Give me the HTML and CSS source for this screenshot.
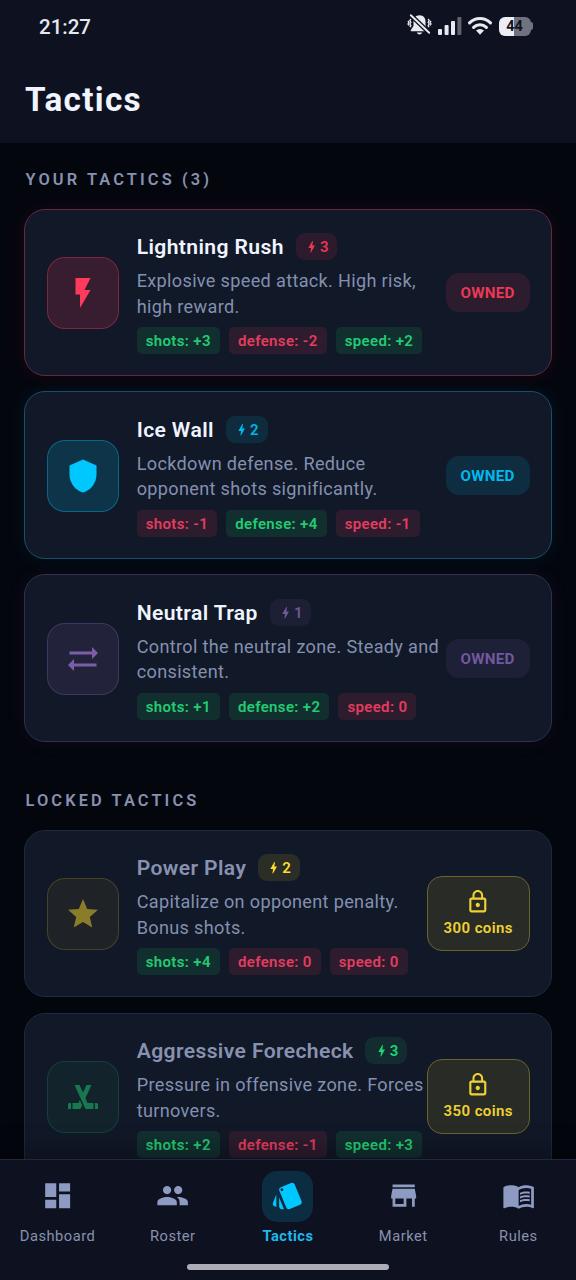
FILE: index.html
```html
<!DOCTYPE html>
<html lang="en">
<head>
<meta charset="utf-8">
<title>Tactics</title>
<link rel="stylesheet" href="styles.css">
</head>
<body>
<svg class="defs" aria-hidden="true">
  <symbol id="bolt" viewBox="0 0 24 24"><path d="M11 21h-1l1-7H7.500c-.88 0-.33-.75-.31-.78C8.480 10.940 10.420 7.540 13.010 3h1l-1 7h3.510c.4 0 .62.190.4.660C12.970 17.550 11 21 11 21z"/></symbol>
  <symbol id="flash" viewBox="0 0 24 24"><path d="M7 2v11h3v9l7-12h-4l4-8z"/></symbol>
  <symbol id="shield" viewBox="0 0 24 24"><path d="M12 1L3 5v6c0 5.550 3.840 10.740 9 12 5.160-1.260 9-6.450 9-12V5l-9-4z"/></symbol>
  <symbol id="swap" viewBox="0 0 24 24"><path d="M22 8l-4-4v3H3v2h15v3l4-4zM2 16l4 4v-3h15v-2H6v-3l-4 4z"/></symbol>
  <symbol id="star" viewBox="0 0 24 24"><path d="M12 17.270L18.180 21l-1.640-7.030L22 9.240l-7.190-.61L12 2 9.190 8.630 2 9.240l5.460 4.730L5.820 21z"/></symbol>
  <symbol id="hockey" viewBox="0 0 24 24"><path d="M2 17v3h2v-4H3c-.55 0-1 .45-1 1zM9 16H5v4l4.690-.01c.38 0 .72-.21.890-.55l.87-1.900-1.590-3.480L9 16zM21.710 16.290A1 1 0 0 0 21 16h-1v4h2v-3c0-.28-.11-.53-.29-.71zM13.600 12.840L17.650 4H14.300l-1.760 3.970-.49 1.100-.05.140L9.700 4H6.350l4.050 8.840 1.520 3.320.08.180 1.420 3.100c.17.340.51.550.89.550L19 20v-4h-4l-1.400-3.160z"/></symbol>
  <symbol id="lock" viewBox="0 0 24 24"><path d="M12 17c1.100 0 2-.9 2-2s-.9-2-2-2-2 .9-2 2 .9 2 2 2zm6-9h-1V6c0-2.760-2.240-5-5-5S7 3.240 7 6v2H6c-1.100 0-2 .9-2 2v10c0 1.100.9 2 2 2h12c1.100 0 2-.9 2-2V10c0-1.100-.9-2-2-2zM8.900 6c0-1.710 1.390-3.100 3.100-3.100s3.100 1.390 3.100 3.100v2H8.900V6zM18 20H6V10h12v10z"/></symbol>
  <symbol id="dashboard" viewBox="0 0 24 24"><path d="M3 13h8V3H3v10zm0 8h8v-6H3v6zm10 0h8V11h-8v10zm0-18v6h8V3h-8z"/></symbol>
  <symbol id="people" viewBox="0 0 24 24"><path d="M16 11c1.660 0 2.990-1.340 2.990-3S17.660 5 16 5s-3 1.340-3 3 1.340 3 3 3zm-8 0c1.660 0 2.990-1.340 2.990-3S9.660 5 8 5 5 6.340 5 8s1.340 3 3 3zm0 2c-2.330 0-7 1.170-7 3.500V19h14v-2.500c0-2.330-4.670-3.500-7-3.500zm8 0c-.29 0-.62.020-.97.050 1.160.840 1.970 1.970 1.970 3.450V19h6v-2.500c0-2.330-4.670-3.500-7-3.500z"/></symbol>
  <symbol id="style" viewBox="0 0 24 24"><path d="M2.530 19.650l1.340.560v-9.030l-2.430 5.860c-.41 1.020.080 2.190 1.090 2.610zm19.500-3.700L17.070 3.980c-.31-.75-1.040-1.210-1.810-1.230-.26 0-.53.040-.79.150L7.100 5.950c-.75.310-1.210 1.030-1.230 1.800-.01.270.04.540.15.800l4.960 11.970c.31.760 1.050 1.220 1.830 1.230.26 0 .52-.05.77-.15l7.360-3.050c1.020-.42 1.510-1.590 1.090-2.600zM7.880 8.750c-.55 0-1-.45-1-1s.45-1 1-1 1 .45 1 1-.45 1-1 1zm-2 11c0 1.100.9 2 2 2h1.450l-3.450-8.340v6.340z"/></symbol>
  <symbol id="store" viewBox="0 0 24 24"><path d="M20 4H4v2h16V4zm1 10v-2l-1-5H4l-1 5v2h1v6h10v-6h4v6h2v-6h1zm-9 4H6v-4h6v4z"/></symbol>
  <symbol id="book" viewBox="0 0 24 24"><path d="M21 5c-1.110-.35-2.330-.5-3.500-.5-1.950 0-4.050.4-5.500 1.500-1.450-1.100-3.550-1.500-5.500-1.500S2.450 4.900 1 6v14.650c0 .25.25.5.5.5.1 0 .15-.05.25-.05C3.100 20.450 5.050 20 6.500 20c1.950 0 4.050.4 5.500 1.500 1.350-.85 3.800-1.500 5.500-1.500 1.650 0 3.350.3 4.750 1.050.1.050.15.050.25.050.25 0 .5-.25.5-.5V6c-.6-.45-1.250-.75-2-1zm0 13.500c-1.100-.35-2.300-.5-3.500-.5-1.700 0-4.150.65-5.500 1.500V8c1.350-.85 3.800-1.500 5.500-1.500 1.200 0 2.400.15 3.500.5v11.500z"/><path d="M17.500 10.500c.88 0 1.730.09 2.500.26V9.240c-.79-.15-1.640-.24-2.500-.24-1.700 0-3.240.29-4.500.83v1.660c1.130-.64 2.700-.99 4.500-.99zM13 12.490v1.660c1.130-.64 2.700-.99 4.500-.99.88 0 1.730.09 2.500.26V11.900c-.79-.15-1.640-.24-2.500-.24-1.700 0-3.240.3-4.500.83zM17.500 14.330c-1.700 0-3.240.29-4.500.83v1.660c1.130-.64 2.700-.99 4.500-.99.88 0 1.730.09 2.500.26v-1.520c-.79-.16-1.640-.24-2.500-.24z"/></symbol>
</svg>

<div class="app">
  <header class="header">
    <div class="status">
      <span class="time">21:27</span>
      <div class="status-icons">
        <svg class="bell" viewBox="0 0 25 22">
          <path class="solid" d="M12.500 1.200c-4 0-6 3-6 6.300v4.500l-2.700 4v1.200h17.400V16l-2.700-4V7.500c0-3.300-2-6.300-6-6.300zM9.800 18.600h5.400c-.5 1.300-1.500 2-2.700 2s-2.200-.7-2.700-2z"/>
          <path class="wave" d="M3.900 5l-1.100 1.500 1.100 1.700-1.100 1.700 1.100 1.800-1 1.400M1 6.800l.9 1.500L1 10l.9 1.500M21.100 5l1.100 1.500-1.100 1.700 1.100 1.700-1.100 1.800 1 1.400M24 6.800l-.9 1.500.9 1.700-.9 1.500"/>
          <path class="gap" d="M3.800 1.200l18.400 17.600"/>
          <path class="slash" d="M3.800 1.200l18.400 17.600"/>
        </svg>
        <svg class="signal" viewBox="0 0 24 18">
          <rect x="0" y="12" width="4" height="6" rx="1"/>
          <rect x="6.600" y="8" width="4" height="10" rx="1"/>
          <rect x="13" y="4" width="4" height="14" rx="1"/>
          <rect class="dim" x="19.400" y="0" width="4" height="18" rx="1"/>
        </svg>
        <svg class="wifi" viewBox="0 0 24 18">
          <path class="arc" d="M1.500 5.800a15 15 0 0 1 21 0M5.600 10.300a9.200 9.200 0 0 1 12.800 0"/>
          <path d="M12 17.800l-4-4.200a5.600 5.600 0 0 1 8 0z"/>
        </svg>
        <div class="battery"><span class="level">44</span><i class="nub"></i></div>
      </div>
    </div>
    <h1 class="title">Tactics</h1>
  </header>

  <main class="content">
    <h2 class="section">YOUR TACTICS (3)</h2>
    <div class="list">
      <article class="card owned red">
        <div class="tile"><svg><use href="#flash"/></svg></div>
        <div class="info">
          <div class="head"><h3 class="name">Lightning Rush</h3><span class="cost"><svg><use href="#bolt"/></svg>3</span></div>
          <p class="desc">Explosive speed attack. High risk,<br>high reward.</p>
          <div class="chips"><span class="chip up">shots: +3</span><span class="chip down">defense: -2</span><span class="chip up">speed: +2</span></div>
        </div>
        <span class="tag">OWNED</span>
      </article>
      <article class="card owned cyan">
        <div class="tile"><svg><use href="#shield"/></svg></div>
        <div class="info">
          <div class="head"><h3 class="name">Ice Wall</h3><span class="cost"><svg><use href="#bolt"/></svg>2</span></div>
          <p class="desc">Lockdown defense. Reduce<br>opponent shots significantly.</p>
          <div class="chips"><span class="chip down">shots: -1</span><span class="chip up">defense: +4</span><span class="chip down">speed: -1</span></div>
        </div>
        <span class="tag">OWNED</span>
      </article>
      <article class="card owned purple">
        <div class="tile"><svg><use href="#swap"/></svg></div>
        <div class="info">
          <div class="head"><h3 class="name">Neutral Trap</h3><span class="cost"><svg><use href="#bolt"/></svg>1</span></div>
          <p class="desc">Control the neutral zone. Steady and<br>consistent.</p>
          <div class="chips"><span class="chip up">shots: +1</span><span class="chip up">defense: +2</span><span class="chip down">speed: 0</span></div>
        </div>
        <span class="tag">OWNED</span>
      </article>
    </div>

    <h2 class="section locked-title">LOCKED TACTICS</h2>
    <div class="list">
      <article class="card locked gold">
        <div class="tile"><svg><use href="#star"/></svg></div>
        <div class="info">
          <div class="head"><h3 class="name">Power Play</h3><span class="cost"><svg><use href="#bolt"/></svg>2</span></div>
          <p class="desc">Capitalize on opponent penalty.<br>Bonus shots.</p>
          <div class="chips"><span class="chip up">shots: +4</span><span class="chip down">defense: 0</span><span class="chip down">speed: 0</span></div>
        </div>
        <div class="price"><svg><use href="#lock"/></svg><span>300 coins</span></div>
      </article>
      <article class="card locked green">
        <div class="tile"><svg><use href="#hockey"/></svg></div>
        <div class="info">
          <div class="head"><h3 class="name">Aggressive Forecheck</h3><span class="cost"><svg><use href="#bolt"/></svg>3</span></div>
          <p class="desc">Pressure in offensive zone. Forces<br>turnovers.</p>
          <div class="chips"><span class="chip up">shots: +2</span><span class="chip down">defense: -1</span><span class="chip up">speed: +3</span></div>
        </div>
        <div class="price"><svg><use href="#lock"/></svg><span>350 coins</span></div>
      </article>
    </div>
  </main>

  <footer class="bottom">
    <nav class="nav">
      <a class="item"><span class="pill"><svg><use href="#dashboard"/></svg></span>Dashboard</a>
      <a class="item"><span class="pill"><svg><use href="#people"/></svg></span>Roster</a>
      <a class="item active"><span class="pill"><svg><use href="#style"/></svg></span>Tactics</a>
      <a class="item"><span class="pill"><svg><use href="#store"/></svg></span>Market</a>
      <a class="item"><span class="pill"><svg><use href="#book"/></svg></span>Rules</a>
    </nav>
    <div class="home"></div>
  </footer>
</div>
</body>
</html>
```
FILE: styles.css
```css
* { box-sizing: border-box; margin: 0; padding: 0; }

body {
  background: #04060e;
  font-family: Roboto, "Noto Sans", sans-serif;
  color: #f0f4ff;
}

svg { display: block; fill: currentColor; }
.defs { display: none; }

.app {
  height: 1280px;
  display: flex;
  flex-direction: column;
  overflow: hidden;
}

/* Header */
.header { flex: none; height: 142.5px; background: #0e111f; }

.status {
  height: 52px;
  padding: 0 43px 0 39px;
  display: flex;
  align-items: center;
  justify-content: space-between;
}
.time { padding-top: 1px; font-size: 20.5px; font-weight: 500; letter-spacing: 0; color: #e6e8f0; }
.status-icons { display: flex; align-items: center; color: #e8eaf2; }
.bell { width: 25px; height: 22px; margin: -2px 6px 0 0; overflow: visible; }
.bell .wave { fill: none; stroke: currentColor; stroke-width: 1.3; }
.bell .gap { stroke: #0e111f; stroke-width: 4.6; }
.bell .slash { stroke: currentColor; stroke-width: 1.9; stroke-linecap: round; }
.signal { width: 24px; height: 18px; margin-right: 6px; }
.signal .dim { opacity: .38; }
.wifi { width: 24px; height: 18px; margin-right: 6.500px; overflow: visible; }
.wifi .arc { fill: none; stroke: currentColor; stroke-width: 3.1; stroke-linecap: round; }
.battery { display: flex; align-items: center; }
.level {
  width: 32px;
  height: 19px;
  border-radius: 6px;
  background: linear-gradient(90deg, #eceef4 48%, #70737f 48%);
  color: #10131f;
  font-size: 14.500px;
  font-weight: 700;
  line-height: 19.500px;
  text-align: center;
}
.nub { width: 2.500px; height: 8px; border-radius: 0 3px 3px 0; background: #70737f; }

.title {
  padding: 26px 25px 0;
  font-size: 33.3px;
  font-weight: 700;
  line-height: 44px;
  letter-spacing: 1.3px;
}

/* Scrolling content */
.content { flex: 1; min-height: 0; overflow: hidden; padding: 27px 24.2px 0; }

.section {
  padding-left: 1.3px;
  margin-bottom: 19px;
  font-size: 16.4px;
  font-weight: 600;
  line-height: 20px;
  letter-spacing: 3.1px;
  color: #8892b0;
}
.locked-title { margin-top: 48.700px; }

.list { display: flex; flex-direction: column; gap: 15.400px; }

.card {
  --edge: #1e2a3f;
  flex: none;
  height: 167.6px;
  display: flex;
  align-items: center;
  border-radius: 21px;
  background: #111827;
  border: 1px solid var(--edge);
  padding: 20.700px 21.300px 20.700px 21.500px;
}
.red    { --c: 255, 59, 92; --edge: #66273f; }
.cyan   { --c: 0, 200, 255; --edge: #175068; }
.purple { --c: 123, 94, 167; --edge: #332f4e; }
.gold   { --c: 255, 221, 45; }
.green  { --c: 30, 213, 118; }
.owned { box-shadow: 0 0 20px rgba(var(--c), .08); }

.tile {
  flex: none;
  width: 72px;
  height: 72px;
  margin: .8px 18px 0 0;
  display: grid;
  place-items: center;
  border-radius: 18px;
  border: 1px solid rgba(var(--c), .45);
  background: rgba(var(--c), .16);
  background-clip: padding-box;
  color: rgb(var(--c));
}
.tile svg { width: 36px; height: 36px; }
.locked .tile { background-color: rgba(var(--c), .06); border-color: rgba(var(--c), .22); }
.locked .tile svg { opacity: .48; }

.info { flex: 1; min-width: 0; padding-top: 2.600px; white-space: nowrap; }
.head { display: flex; align-items: center; gap: 11.700px; height: 27px; }
.name { font-size: 21.1px; font-weight: 600; letter-spacing: .38px; }
.locked .name { color: #8892b0; }
.cost {
  height: 27px;
  padding: 0 9px 0 8.500px;
  display: flex;
  align-items: center;
  gap: .5px;
  border-radius: 9px;
  background: rgba(var(--c), .11);
  color: rgb(var(--c));
  font-size: 15px;
  font-weight: 600;
}
.cost svg { width: 15.400px; height: 15.400px; }
.owned .cost { color: rgba(var(--c), .9); }

.desc {
  margin-top: 8px;
  font-size: 18.1px;
  line-height: 25.300px;
  letter-spacing: .33px;
  color: #8390b0;
}

.chips { display: flex; gap: 9px; margin-top: 8.200px; }
.chip {
  height: 27px;
  padding: 0 9px;
  border-radius: 5px;
  font-size: 15px;
  font-weight: 600;
  line-height: 28.500px;
  letter-spacing: .36px;
}
.up { color: #22cc72; background: rgba(30, 213, 118, .12); }
.down { color: #e23c5f; background: rgba(255, 59, 92, .12); }

.tag {
  flex: none;
  width: 84px;
  height: 38.600px;
  margin-top: .6px;
  border-radius: 13px;
  background: rgba(var(--c), .12);
  color: rgba(var(--c), .92);
  font-size: 15.2px;
  font-weight: 700;
  line-height: 41px;
  letter-spacing: .2px;
  text-align: center;
}

.price {
  flex: none;
  width: 102.500px;
  height: 75px;
  display: flex;
  flex-direction: column;
  align-items: center;
  padding-top: 11.500px;
  border: 1px solid #6a652b;
  border-radius: 15px;
  background: #292b27;
  color: #efd233;
  font-size: 15px;
  font-weight: 600;
  line-height: 20px;
  letter-spacing: .4px;
  white-space: nowrap;
}
.price svg { width: 25.600px; height: 25.600px; margin-bottom: 4px; }

/* Bottom navigation */
.bottom {
  flex: none;
  position: relative;
  height: 121px;
  border-top: 1px solid #1e2a3f;
  background: #0e111f;
  box-shadow: 0 -4px 26px rgba(0, 0, 0, .4);
}
.nav { display: grid; grid-template-columns: repeat(5, 1fr); padding-top: 10.500px; }
.item {
  display: flex;
  flex-direction: column;
  align-items: center;
  font-size: 14.7px;
  line-height: 18px;
  letter-spacing: .5px;
  color: #8892b0;
}
.pill {
  width: 51px;
  height: 51px;
  margin-bottom: 5px;
  display: grid;
  place-items: center;
  border-radius: 15px;
}
.pill svg { width: 33.300px; height: 33.300px; color: #8d9ac2; }
.active { color: #1cb9ee; font-weight: 700; }
.active .pill { background: #0c2c42; }
.active .pill svg { color: #00c8ff; }

.home {
  width: 202px;
  height: 6px;
  margin: 19.500px auto 0;
  border-radius: 3px;
  background: #adadb5;
}
```
